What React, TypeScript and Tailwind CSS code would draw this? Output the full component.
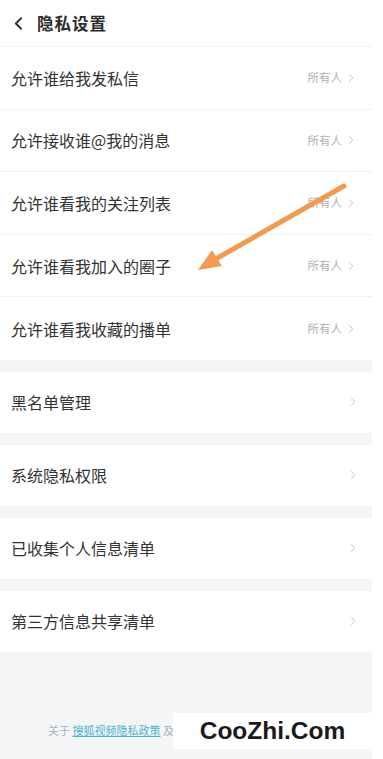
import { ChevronLeft, ChevronRight } from "lucide-react";

const groupRows = [
  "允许谁给我发私信",
  "允许接收谁@我的消息",
  "允许谁看我的关注列表",
  "允许谁看我加入的圈子",
  "允许谁看我收藏的播单",
];

const singleRows = ["黑名单管理", "系统隐私权限", "已收集个人信息清单", "第三方信息共享清单"];

const font = { fontFamily: '"Noto Sans CJK SC", "Noto Sans", sans-serif' };

export default function App() {
  return (
    <div className="relative h-[759px] w-[383px] overflow-hidden bg-white" style={font}>
      <div className="flex h-full w-[372px] flex-col bg-[#f3f5f7]">
        <div className="flex h-[47px] shrink-0 items-center gap-[8px] border-b border-[#f1f1f1] bg-white pl-[8px]">
          <ChevronLeft className="h-[21px] w-[21px] text-[#333]" strokeWidth={2.2} />
          <span className="text-[16.5px] font-bold tracking-[1px] text-[#2c2c2c]">隐私设置</span>
        </div>

        <div className="bg-white">
          {groupRows.map((t, i) => (
            <div
              key={t}
              className={
                "flex h-[62.6px] items-center justify-between pl-[11px] pr-[14px] " +
                (i < groupRows.length - 1 ? "border-b border-[#f1f1f1]" : "")
              }
            >
              <span className="text-[16px] text-[#333]">{t}</span>
              <span className="flex items-center gap-[2px] text-[11.5px] text-[#b0b0b0]">
                所有人
                <ChevronRight className="h-[14px] w-[14px] text-[#bdbdbd]" strokeWidth={1.6} />
              </span>
            </div>
          ))}
        </div>

        {singleRows.map((t) => (
          <div key={t} className="mt-[12px] flex h-[61px] items-center justify-between bg-white pl-[11px] pr-[12px]">
            <span className="text-[16px] text-[#333]">{t}</span>
            <ChevronRight className="h-[14px] w-[14px] text-[#c4c4c4]" strokeWidth={1.6} />
          </div>
        ))}

        <div className="flex flex-1 items-end pb-[21px] pl-[48px]">
          <span className="text-[11px] text-[#aab0b6]">
            关于 <span className="text-[#4fb3cf] underline">搜狐视频隐私政策</span> 及
          </span>
        </div>
      </div>

      {/* watermark */}
      <div className="absolute left-[173px] top-[713px] flex h-[36px] w-[199px] items-center justify-center bg-white">
        <span className="text-[24.5px] font-bold text-[#1a1a1a]" style={{ fontFamily: '"Liberation Sans", Arial, sans-serif' }}>
          CooZhi.Com
        </span>
      </div>

      {/* annotation arrow */}
      <svg className="pointer-events-none absolute left-0 top-0" width="383" height="759">
        <line x1="344" y1="186" x2="214" y2="260" stroke="#f39a4f" strokeWidth="5" strokeLinecap="round" />
        <polygon points="198,270 212,250 222,266" fill="#f39a4f" />
      </svg>
    </div>
  );
}
